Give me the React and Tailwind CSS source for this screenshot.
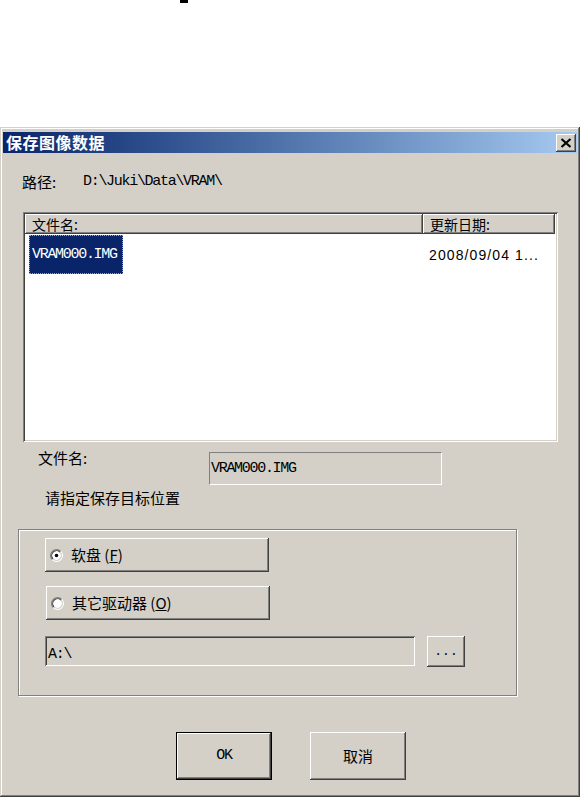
export default function App() {
  const raised =
    "shadow-[inset_-1px_-1px_#404040,inset_1px_1px_#ffffff,inset_-2px_-2px_#808080,inset_2px_2px_#d4d0c8]";
  const sunken =
    "shadow-[inset_1px_1px_#808080,inset_-1px_-1px_#ffffff,inset_2px_2px_#404040,inset_-2px_-2px_#d4d0c8]";
  const cjk = "font-['Noto_Sans_CJK_SC',sans-serif]";
  const mono = "font-['Liberation_Mono',monospace] text-[15px] tracking-[-1.3px]";

  const Radio = ({ checked }) => (
    <svg width="13" height="13" viewBox="0 0 12 12" className="shrink-0">
      <circle cx="6" cy="6" r="4.5" fill="#ffffff" />
      <path d="M2.11 9.89 A5.5 5.5 0 0 1 9.89 2.11" stroke="#808080" strokeWidth="1" fill="none" />
      <path d="M9.89 2.11 A5.5 5.5 0 0 1 2.11 9.89" stroke="#ffffff" strokeWidth="1" fill="none" />
      <path d="M2.82 9.18 A4.5 4.5 0 0 1 9.18 2.82" stroke="#404040" strokeWidth="1" fill="none" />
      <path d="M9.18 2.82 A4.5 4.5 0 0 1 2.82 9.18" stroke="#d4d0c8" strokeWidth="1" fill="none" />
      {checked && <circle cx="6" cy="6" r="1.6" fill="#000000" />}
    </svg>
  );

  return (
    <div className="w-[582px] h-[797px] bg-white overflow-hidden">
      <div className="ml-[180px] w-[8px] h-[3px] bg-black" />
      <div className="h-[124px]" />
      <div
        className={`w-[580px] h-[670px] bg-[#d4d0c8] pt-[5px] px-[3px] shadow-[inset_-1px_-1px_#404040,inset_1px_1px_#d4d0c8,inset_-2px_-2px_#808080,inset_2px_2px_#ffffff] ${cjk}`}
      >
        {/* title bar */}
        <div className="h-[21px] flex items-center justify-between pl-[3px] pr-[1px] bg-linear-to-r from-[#0a246a] to-[#a6caf0]">
          <span className="text-white font-bold text-[16px] leading-[21px] tracking-[0.5px]">
            保存图像数据
          </span>
          <div className={`w-[20px] h-[18px] bg-[#d4d0c8] flex items-center justify-center ${raised}`}>
            <svg width="12" height="10" viewBox="0 0 12 10">
              <path d="M1.5 1 L10.5 9 M10.5 1 L1.5 9" stroke="#000000" strokeWidth="2.2" />
            </svg>
          </div>
        </div>

        {/* path row */}
        <div className="mt-[19px] h-[20px] flex items-center text-black">
          <span className="ml-[19px] w-[61px] text-[15px] leading-[20px]">路径:</span>
          <span className={`${mono} leading-[20px]`}>D:\Juki\Data\VRAM\</span>
        </div>

        {/* list view */}
        <div className={`mt-[20px] ml-[20px] w-[535px] h-[230px] bg-white p-[2px] ${sunken}`}>
          <div className="flex h-[20px]">
            <div className={`w-[398px] h-[20px] bg-[#d4d0c8] pl-[7px] text-[14px] leading-[20px] text-black ${raised}`}>
              文件名:
            </div>
            <div className={`w-[132px] h-[20px] bg-[#d4d0c8] pl-[7px] text-[14px] leading-[20px] text-black ${raised}`}>
              更新日期:
            </div>
          </div>
          <div className="flex">
            <div className="w-[398px]">
              <div className="ml-[4px] mt-[1px] w-[94px] h-[39px] bg-[#0a246a] border border-dotted border-[#a8a89a] flex items-center pl-[2px]">
                <span className={`${mono} text-white leading-[18px]`}>VRAM000.IMG</span>
              </div>
            </div>
            <div className="mt-[1px] h-[39px] flex items-center pl-[6px]">
              <span className="font-['Liberation_Sans',sans-serif] text-[14px] tracking-[1.1px] text-black leading-[18px]">
                2008/09/04 1...
              </span>
            </div>
          </div>
        </div>

        {/* file name row */}
        <div className="mt-[6px] flex items-start">
          <span className="ml-[35px] w-[171px] text-[15px] leading-[20px] text-black">文件名:</span>
          <div className="mt-[4px] w-[233px] h-[33px] border border-t-[#808080] border-l-[#808080] border-b-white border-r-white pl-[1px]">
            <span className={`${mono} text-black leading-[18px]`}>VRAM000.IMG</span>
          </div>
        </div>

        <div className="mt-[3px] ml-[42px] text-[15px] leading-[20px] text-black">请指定保存目标位置</div>

        {/* group box */}
        <div className="mt-[21px] ml-[15px] w-[499px] h-[167px] border border-[#808080] shadow-[inset_1px_1px_#ffffff,1px_1px_#ffffff] pl-[26px] pt-[8px]">
          <div className={`w-[224px] h-[34px] bg-[#d4d0c8] flex items-center pl-[5px] gap-[8px] ${raised}`}>
            <Radio checked />
            <span className="text-[15px] leading-[20px] text-black">
              软盘 (<span className="underline">F</span>)
            </span>
          </div>
          <div className={`mt-[14px] ml-[1px] w-[224px] h-[34px] bg-[#d4d0c8] flex items-center pl-[5px] gap-[8px] ${raised}`}>
            <Radio />
            <span className="text-[15px] leading-[20px] text-black">
              其它驱动器 (<span className="underline">O</span>)
            </span>
          </div>
          <div className="mt-[16px] flex items-start">
            <div className={`w-[370px] h-[30px] bg-[#d4d0c8] pl-[3px] pt-[3px] ${sunken}`}>
              <span className={`${mono} text-black leading-[18px]`}>A:\</span>
            </div>
            <div className={`ml-[12px] w-[38px] h-[31px] bg-[#d4d0c8] flex items-center justify-center ${raised}`}>
              <span className="font-['Liberation_Mono',monospace] text-[13px] text-black leading-[14px]">...</span>
            </div>
          </div>
        </div>

        {/* buttons */}
        <div className="mt-[36px] ml-[173px] flex gap-[38px]">
          <div className="w-[96px] h-[48px] border border-black">
            <div className={`w-full h-full bg-[#d4d0c8] flex items-center justify-center ${raised}`}>
              <span className={`${mono} text-black leading-[18px]`}>OK</span>
            </div>
          </div>
          <div className={`w-[96px] h-[48px] bg-[#d4d0c8] flex items-center justify-center ${raised}`}>
            <span className="text-[15px] leading-[20px] text-black">取消</span>
          </div>
        </div>
      </div>
    </div>
  );
}
